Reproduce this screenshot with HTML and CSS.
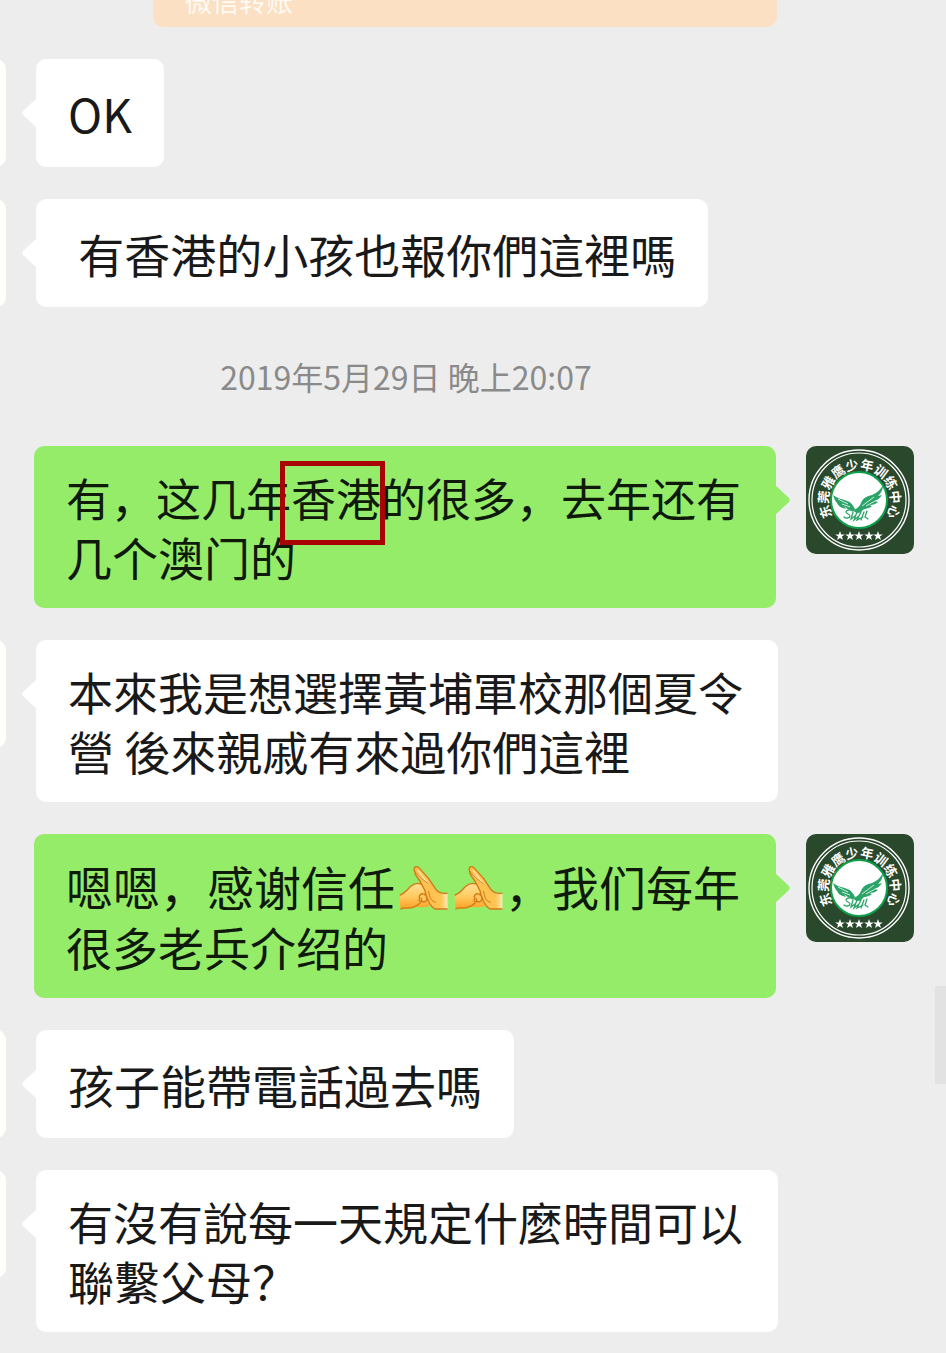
FILE: index.html
```html
<!DOCTYPE html>
<html lang="zh-CN">
<head>
  <meta charset="UTF-8">
  <meta name="viewport" content="width=device-width, initial-scale=1">
  <title>聊天记录</title>
  <link rel="stylesheet" href="styles.css">
</head>
<body>

<!-- shared drawings -->
<svg class="defs" width="0" height="0" aria-hidden="true">
  <defs>
    <linearGradient id="skin" x1="0" y1="0" x2="0" y2="1">
      <stop offset="0" stop-color="#ffdf96"/>
      <stop offset="0.5" stop-color="#ffcc62"/>
      <stop offset="1" stop-color="#fc9f22"/>
    </linearGradient>
    <linearGradient id="palm" x1="0" y1="0" x2="1" y2="0">
      <stop offset="0" stop-color="#ffbe4c"/>
      <stop offset="0.8" stop-color="#ffc452"/>
      <stop offset="1" stop-color="#ffe9b4"/>
    </linearGradient>
    <path id="star" d="M0-5 1.2-1.6 4.8-1.6 1.9.6 3 4.1 0 2-3 4.1-1.9.6-4.8-1.6-1.2-1.6z"/>
    <path id="ring" d="M53 85.5a31 31 0 1 1 1 0"/>

    <symbol id="logo" viewBox="0 0 108 108">
      <rect width="108" height="108" fill="#29482c"/>
      <g fill="none" stroke="#fff">
        <circle cx="53" cy="54" r="50" stroke-width="1.4"/>
        <circle cx="53" cy="54" r="47" stroke-width="1.2"/>
      </g>
      <circle cx="53" cy="54" r="28" fill="#fff" stroke="#0fa04e" stroke-width="2"/>
      <text class="logo-text" fill="#fff"><textPath href="#ring" startOffset="50%" text-anchor="middle">东莞雅鹰少年训练中心</textPath></text>
      <g fill="#fff">
        <use href="#star" x="34" y="90"/>
        <use href="#star" x="44" y="90"/>
        <use href="#star" x="53" y="90"/>
        <use href="#star" x="63" y="90"/>
        <use href="#star" x="72" y="90"/>
      </g>
      <g fill="#2aa468">
        <path d="M27 49c5 4 10 4 14 6 4 1 6 4 8 8l-2 2c-4-1-7-3-9-5l2 3c-5-1-8-3-9-6-2-2-3-5-4-8z"/>
        <path d="M47 64c4-1 7-4 8-7 2-5 6-7 11-8 5-2 8-5 11-10 0 5-2 8-5 11l4-1c-2 3-4 5-7 6l3 1c-2 2-5 3-8 3l2 2c-3 2-6 2-8 2l-3 3c-3 2-6 1-8-2z"/>
      </g>
      <path d="M32 53l10 5M36 58l8 3M56 60l12-9M60 60l11-6M58 64l8-3" fill="none" stroke="#fff" stroke-width=".8"/>
      <path d="M47 65c-3-2-7-1-7 1s4 2 4 4-4 3-6 1M47 66l-2 7 4-3M51 66l-3 8 5-4M55 66l-4 8 6-3M58 66l-3 8M61 65l-2 6 3 2" fill="none" stroke="#2aa468" stroke-width="1.3" stroke-linecap="round"/>
    </symbol>

    <symbol id="salute" viewBox="0 0 144 132">
      <path d="M0 88C16 82 24 70 34 61c12-10 26-12 36-4l26 40-6 24c-14 4-26 2-38 2-14 2-24 6-36 5l-13 1z" fill="url(#skin)"/>
      <path d="M2 87C16 82 24 70 34 61c10-9 22-11 32-6M4 129c10-6 24-1 36-5 10-3 14-6 22-13" fill="none" stroke="#cf7a18" stroke-width="4" stroke-linecap="round"/>
      <path d="M44 11C43 3 51-1 58 5l29 32 20 30c7 10 13 15 37 15v48h-38C92 120 84 100 76 72L62 45 48 25c-3-5-5-10-4-14z" fill="url(#palm)"/>
      <path d="M144 82c-22 1-30-4-37-15L87 37 58 5C51-1 43 3 44 11c0 3 1 5 3 7-2 3-1 5 1 8l15 22 13 25c4 20 12 44 30 56h38" fill="none" stroke="#cf7a18" stroke-width="4" stroke-linejoin="round"/>
      <path d="M56 13l30 39M54 25l33 30" fill="none" stroke="#ffe3a8" stroke-width="4" stroke-linecap="round"/>
      <path d="M47 18l20 20 20 16M87 76c4 10 2 16 7 23 4 6 8 8 14 10" fill="none" stroke="#cf7a18" stroke-width="3" stroke-linecap="round"/>
      <path d="M67 107c-8 1-11-6-6-10-5-9 4-16 12-13 10 3 12 17 5 22-8 4-14-1-12-8" fill="#ffc65d" stroke="#cf7a18" stroke-width="4" stroke-linecap="round"/>
    </symbol>
  </defs>
</svg>

<main class="chat">
  <div class="transfer">微信转账</div>

  <div class="row received">
    <div class="avatar"></div>
    <div class="bubble">OK</div>
  </div>

  <div class="row received">
    <div class="avatar"></div>
    <div class="bubble"> 有香港的小孩也報你們這裡嗎</div>
  </div>

  <time class="date" datetime="2019-05-29T20:07">2019年5月29日 晚上20:07</time>

  <div class="row sent">
    <div class="bubble long"><p><span class="full">有，这几年<mark>香港</mark>的很多，去年还有</span><br>几个澳门的</p></div>
    <svg class="avatar" role="img" aria-label="东莞雅鹰少年训练中心"><use href="#logo"/></svg>
  </div>

  <div class="row received">
    <div class="avatar"></div>
    <div class="bubble long"><p><span class="full">本來我是想選擇黃埔軍校那個夏令</span><br>營 後來親戚有來過你們這裡</p></div>
  </div>

  <div class="row sent">
    <div class="bubble long loose"><p><span class="wide">嗯嗯，感谢信任<svg class="emoji" role="img" aria-label="抱拳"><use href="#salute"/></svg><svg class="emoji" role="img" aria-label="抱拳"><use href="#salute"/></svg>，我们每年</span><br>很多老兵介绍的</p></div>
    <svg class="avatar" role="img" aria-label="东莞雅鹰少年训练中心"><use href="#logo"/></svg>
  </div>

  <div class="row received">
    <div class="avatar"></div>
    <div class="bubble">孩子能帶電話過去嗎</div>
  </div>

  <div class="row received">
    <div class="avatar"></div>
    <div class="bubble long"><p><span class="full">有沒有說每一天規定什麼時間可以</span><br>聯繫父母？</p></div>
  </div>

  <div class="scroll-thumb"></div>
</main>

</body>
</html>
```
FILE: styles.css
```css
* {
  box-sizing: border-box;
}
body {
  margin: 0;
  background: #ededed;
  color: #191919;
  font-family: "Noto Sans CJK SC", "Liberation Sans", sans-serif;
  font-size: 46px;
  line-height: 59px;
}
p {
  margin: 0;
}
.defs {
  position: absolute;
}
.chat {
  position: relative;
  display: flex;
  flex-direction: column;
  gap: 32px;
  padding-bottom: 21px;
  overflow: hidden;
}

/* transfer card, mostly scrolled out of view */
.transfer {
  height: 48px;
  margin: -21px 169px 0 153px;
  padding-left: 32px;
  border-radius: 0 0 10px 10px;
  background: #fce0c4;
  color: #fffaf3;
  font-size: 27px;
  line-height: 44px;
}

.row {
  display: flex;
  align-items: flex-start;
  gap: 30px;
}
.received {
  margin-left: -102px;
  padding-right: 168px;
}
.sent {
  padding: 0 32px 0 34px;
}
.avatar {
  flex: none;
  width: 108px;
  height: 108px;
  border-radius: 10px;
  background: #fdfffa;
}
.logo-text {
  font-size: 13px;
  font-weight: 700;
}

.bubble {
  position: relative;
  display: flex;
  align-items: center;
  min-height: 108px;
  padding: 22px 32px;
  border-radius: 10px;
  background: #fff;
  white-space: pre-wrap;
}
.long {
  flex: 1;
}
.sent .bubble {
  background: #95ec69;
  color: #0f1a0a;
}
.loose {
  line-height: 60px;
}
.bubble::before {
  content: "";
  position: absolute;
  top: 39px;
  left: -14px;
  width: 15px;
  height: 30px;
  background: inherit;
  clip-path: polygon(100% 0, 10% 42%, 0 50%, 10% 58%, 100% 100%);
}
.sent .bubble::before {
  left: auto;
  right: -14px;
  clip-path: polygon(0 0, 90% 42%, 100% 50%, 90% 58%, 0 100%);
}
.full {
  font-size: 45px;
}
.wide {
  font-size: 47px;
}
.emoji {
  width: 49px;
  height: 44px;
  margin: 0 2px 0 4px;
  vertical-align: -4px;
}

/* red frame round the marked word */
mark {
  position: relative;
  display: inline-block;
  background: none;
  color: inherit;
}
mark::after {
  content: "";
  position: absolute;
  inset: -7px -4px -18px -11px;
  border: 5px solid #a90404;
}

.date {
  margin: 13px 134px 13px 0;
  color: #8a8a8a;
  font-size: 32px;
  line-height: 49px;
  text-align: center;
}
.scroll-thumb {
  position: absolute;
  top: 986px;
  right: 0;
  width: 11px;
  height: 98px;
  background: #e2e2e2;
}
```
